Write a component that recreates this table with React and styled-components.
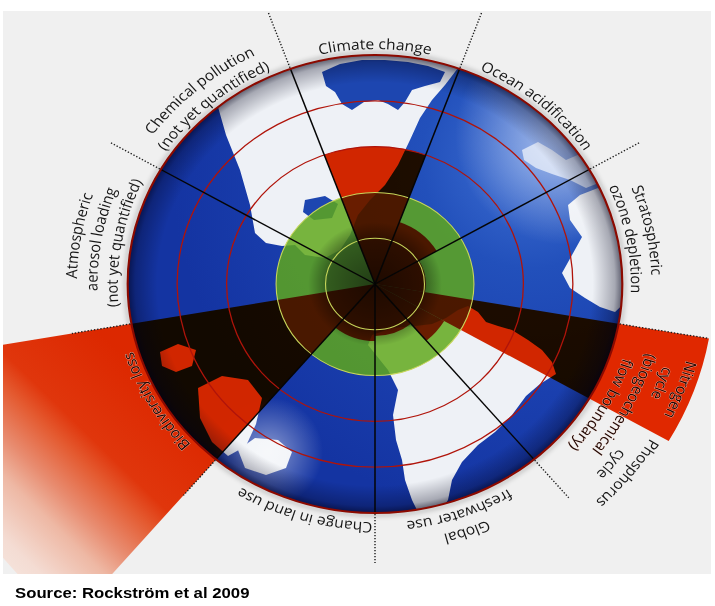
import React from 'react';
import styled, { createGlobalStyle } from 'styled-components';

const GlobalStyle = createGlobalStyle`
  html, body {
    margin: 0;
    padding: 0;
    background: #ffffff;
  }
`;

const Page = styled.div`
  width: 715px;
  height: 606px;
  padding: 11px 0 0 3px;
  box-sizing: border-box;
  overflow: hidden;
`;

const Panel = styled.div`
  width: 708px;
  height: 563px;
  background: #f0f0f0;
  overflow: hidden;
`;

const Chart = styled.svg`
  display: block;
  width: 708px;
  height: 563px;
`;

const Globe = styled.g`
  isolation: isolate;
`;

const Land = styled.polygon`
  fill: ${({ $tone }) => $tone || '#eef1f6'};
`;

const Wedge = styled.path`
  fill: #e02800;
  mix-blend-mode: multiply;
`;

const OuterWedge = styled.path`
  fill: ${({ $fill }) => $fill};
`;

const Ring = styled.circle`
  fill: none;
  stroke: ${({ $c }) => $c};
  stroke-width: ${({ $w }) => $w};
`;

const Spoke = styled.line`
  stroke: #050505;
  stroke-width: 1.4;
`;

const Dots = styled.line`
  stroke: #1a1a1a;
  stroke-width: 1.3;
  stroke-dasharray: 1.3 1.7;
`;

const Label = styled.text`
  font-family: "Open Sans", "Noto Sans", "DejaVu Sans", sans-serif;
  font-size: 14.5px;
  fill: #161616;
`;

const RedLabel = styled(Label)`
  fill: #1e0602;
  stroke: rgba(255, 225, 215, 0.75);
  stroke-width: 0.7;
  paint-order: stroke;
`;

const Source = styled.div`
  margin-top: 10px;
  padding-left: 12px;
  font-family: "Liberation Sans", Arial, sans-serif;
  font-weight: bold;
  font-size: 15.5px;
  line-height: 18px;
  color: #000;
`;

const SourceText = styled.span`
  display: inline-block;
  transform: scaleX(1.08);
  transform-origin: left center;
`;

const R = 229;
const STEP = R / 5;

const pt = (r, a) => {
  const t = (a * Math.PI) / 180;
  return [r * Math.sin(t), -r * Math.cos(t)];
};
const f = (n) => n.toFixed(2);

const sector = (r0, r1, a0, a1) => {
  const [x1, y1] = pt(r1, a0);
  const [x2, y2] = pt(r1, a1);
  const large = a1 - a0 > 180 ? 1 : 0;
  if (r0 === 0) {
    return `M0 0 L${f(x1)} ${f(y1)} A${r1} ${r1} 0 ${large} 1 ${f(x2)} ${f(y2)} Z`;
  }
  const [x3, y3] = pt(r0, a1);
  const [x4, y4] = pt(r0, a0);
  return `M${f(x4)} ${f(y4)} L${f(x1)} ${f(y1)} A${r1} ${r1} 0 ${large} 1 ${f(x2)} ${f(y2)} L${f(x3)} ${f(y3)} A${r0} ${r0} 0 ${large} 0 ${f(x4)} ${f(y4)} Z`;
};

// full clockwise circle that puts its midpoint at angle c
const labelPath = (r, c) => {
  const [x1, y1] = pt(r, c - 180);
  const [x2, y2] = pt(r, c);
  return `M${f(x1)} ${f(y1)} A${r} ${r} 0 1 1 ${f(x2)} ${f(y2)} A${r} ${r} 0 1 1 ${f(x1)} ${f(y1)}`;
};

// boundaries: [from angle, to angle, radius of the red wedge]
const wedges = [
  [-20, 20, STEP * 3],
  [20, 60, 66],
  [60, 100, 47],
  [100, 120, R],
  [120, 140, 74],
  [140, 180, 52],
  [180, 220, 57],
  [220, 260, R],
];

const spokes = [-20, 20, 60, 140, 180, 220, 300];

const dotted = [
  [-20, 290],
  [20, 290],
  [60, 283],
  [100, 314],
  [140, 279],
  [180, 279],
  [220, 276],
  [260, 285],
  [300, 284],
];

const labels = [
  { t: 'Climate change', a: 0, r: 235 },
  { t: 'Ocean acidification', a: 40, r: 235 },
  { t: 'Stratospheric', a: 78, r: 256 },
  { t: 'ozone depletion', a: 79, r: 237 },
  { t: 'Phosphorus', a: 129, r: 298 },
  { t: 'cycle', a: 129.5, r: 279 },
  { t: 'Global', a: 161, r: 258 },
  { t: 'freshwater use', a: 161, r: 239 },
  { t: 'Change in land use', a: 196, r: 238 },
  { t: 'Atmospheric', a: 280, r: 276 },
  { t: 'aerosol loading', a: 280, r: 257 },
  { t: '(not yet quantified)', a: 280, r: 238 },
  { t: 'Chemical pollution', a: 320, r: 254 },
  { t: '(not yet quantified)', a: 320, r: 235 },
];

const redLabels = [
  { t: 'Nitrogen', a: 110.5, r: 298 },
  { t: 'cycle', a: 110.5, r: 279 },
  { t: '(biogeochemical', a: 117.5, r: 260 },
  { t: 'flow boundary)', a: 120, r: 241 },
  { t: 'Biodiversity loss', a: 240, r: 234 },
];

const lands = [
  // north / arctic land
  '150,30 470,30 458,68 445,85 432,100 420,118 410,140 398,165 385,185 370,200 358,215 350,235 340,250 325,258 305,255 295,245 282,246 266,243 255,233 250,205 240,170 226,135 216,100 200,80 150,60',
  // east land
  '598,188 612,200 628,240 628,300 615,312 600,307 585,298 570,288 562,273 572,255 582,237 570,220 568,205 580,195',
  // africa and south america
  '372,335 392,328 415,326 432,324 446,318 458,310 468,306 478,312 486,322 498,326 512,330 528,340 542,350 552,362 556,374 540,384 526,396 512,415 495,432 478,445 462,462 452,480 448,500 440,512 420,516 412,500 405,480 402,460 396,440 393,415 398,390 388,370 376,355 368,345',
  // south west
  '238,450 255,438 278,440 292,452 286,468 266,475 245,468',
  // under biodiversity
  '198,388 222,376 248,380 262,398 256,424 246,446 228,456 212,442 200,418',
  '160,352 178,344 196,350 192,366 176,372 162,366',
];

const tinted = [
  // arctic sea
  { p: '322,72 340,64 362,60 385,60 408,62 428,66 445,72 440,82 425,86 412,90 405,102 398,110 388,104 378,100 364,102 352,110 342,104 335,92 326,86', c: '#1d46b0' },
  // gulf
  { p: '305,200 325,196 338,204 332,218 314,220 303,212', c: '#1d46b0' },
  // small europe islands
  { p: '522,150 538,142 552,150 566,160 580,154 592,168 596,184 586,188 570,180 552,174 536,168 524,160', c: '#b9cbef' },
];

const App = () => (
  <Page>
    <GlobalStyle />
    <Panel>
      <Chart viewBox="3 11 708 563">
        <defs>
          <clipPath id="globeClip">
            <ellipse cx="375" cy="284" rx={R * 1.08} ry={R} />
          </clipPath>
          <radialGradient id="ocean" gradientUnits="userSpaceOnUse" cx="530" cy="160" r="360">
            <stop offset="0" stopColor="#3f70d4" />
            <stop offset="0.3" stopColor="#2250bb" />
            <stop offset="0.65" stopColor="#1a3fae" />
            <stop offset="1" stopColor="#1434a2" />
          </radialGradient>
          <radialGradient id="gloss" gradientUnits="userSpaceOnUse" cx="565" cy="135" r="110">
            <stop offset="0" stopColor="#ffffff" stopOpacity="0.6" />
            <stop offset="1" stopColor="#ffffff" stopOpacity="0" />
          </radialGradient>
          <radialGradient id="gloss2" gradientUnits="userSpaceOnUse" cx="268" cy="452" r="55">
            <stop offset="0" stopColor="#ffffff" stopOpacity="0.5" />
            <stop offset="1" stopColor="#ffffff" stopOpacity="0" />
          </radialGradient>
          <radialGradient id="vignette" gradientUnits="userSpaceOnUse" cx="0" cy="0" r={R}>
            <stop offset="0.88" stopColor="#000018" stopOpacity="0" />
            <stop offset="0.97" stopColor="#000018" stopOpacity="0.3" />
            <stop offset="1" stopColor="#000018" stopOpacity="0.6" />
          </radialGradient>
          <radialGradient id="core" gradientUnits="userSpaceOnUse" cx="0" cy="0" r="62">
            <stop offset="0" stopColor="#000000" stopOpacity="0.6" />
            <stop offset="0.7" stopColor="#000000" stopOpacity="0.4" />
            <stop offset="1" stopColor="#000000" stopOpacity="0" />
          </radialGradient>
          <linearGradient id="bioFade" gradientUnits="userSpaceOnUse" x1="-171" y1="136" x2="-333" y2="291">
            <stop offset="0" stopColor="#dc2800" />
            <stop offset="0.35" stopColor="#e0360c" />
            <stop offset="0.45" stopColor="#e45a30" />
            <stop offset="0.61" stopColor="#e88c70" />
            <stop offset="0.73" stopColor="#eeb8a4" />
            <stop offset="0.92" stopColor="#f4dcd3" />
            <stop offset="1" stopColor="#f5e2da" />
          </linearGradient>
          <filter id="soft" x="-10%" y="-10%" width="120%" height="120%">
            <feGaussianBlur stdDeviation="2" />
          </filter>
          {[...labels, ...redLabels].map((l, i) => (
            <path key={i} id={`lp${i}`} d={labelPath(l.r, l.a)} />
          ))}
        </defs>

        <ellipse cx="375" cy="284" rx={R * 1.08 + 2} ry={R + 2} fill="none" stroke="#000" strokeOpacity="0.18" strokeWidth="4" filter="url(#soft)" />

        <Globe>
          <g clipPath="url(#globeClip)">
            <ellipse cx="375" cy="284" rx={R * 1.08} ry={R} fill="url(#ocean)" />
            {lands.map((p, i) => (
              <Land key={i} points={p} />
            ))}
            {tinted.map((s, i) => (
              <Land key={i} points={s.p} $tone={s.c} />
            ))}
            <ellipse cx="375" cy="284" rx={R * 1.08} ry={R} fill="url(#gloss)" />
            <ellipse cx="375" cy="284" rx={R * 1.08} ry={R} fill="url(#gloss2)" />
          </g>

          <g transform="translate(375 284) scale(1.08 1)">
            <circle r={STEP * 2} fill="#5fa81a" fillOpacity="0.84" />
            {wedges.map(([a0, a1, r], i) => (
              <Wedge key={i} d={sector(0, r, a0, a1)} />
            ))}
            <circle r="62" fill="url(#core)" />
            <circle r={R} fill="url(#vignette)" />

            <Ring r={STEP} $c="#c8d65a" $w={1} />
            <Ring r={STEP * 2} $c="#c8d65a" $w={1} />
            <Ring r={STEP * 3} $c="#b0140a" $w={1.2} />
            <Ring r={STEP * 4} $c="#b0140a" $w={1.2} />

            {spokes.map((a) => {
              const [x, y] = pt(R, a);
              return <Spoke key={a} x1="0" y1="0" x2={x} y2={y} />;
            })}

            <OuterWedge d={sector(R, 314, 100, 120)} $fill="#e02800" />
            <OuterWedge d={sector(R, 440, 220, 260)} $fill="url(#bioFade)" />

            <Ring r={R} $c="#8c0a00" $w={2} />

            {dotted.map(([a, r2]) => {
              const [x1, y1] = pt(R + 1, a);
              const [x2, y2] = pt(r2, a);
              return <Dots key={a} x1={x1} y1={y1} x2={x2} y2={y2} />;
            })}

            {labels.map((l, i) => (
              <Label key={i} textAnchor="middle">
                <textPath href={`#lp${i}`} startOffset="50%">{l.t}</textPath>
              </Label>
            ))}
            {redLabels.map((l, i) => (
              <RedLabel key={i} textAnchor="middle">
                <textPath href={`#lp${i + labels.length}`} startOffset="50%">{l.t}</textPath>
              </RedLabel>
            ))}
          </g>
        </Globe>
      </Chart>
    </Panel>
    <Source>
      <SourceText>Source: Rockström et al 2009</SourceText>
    </Source>
  </Page>
);

export default App;
